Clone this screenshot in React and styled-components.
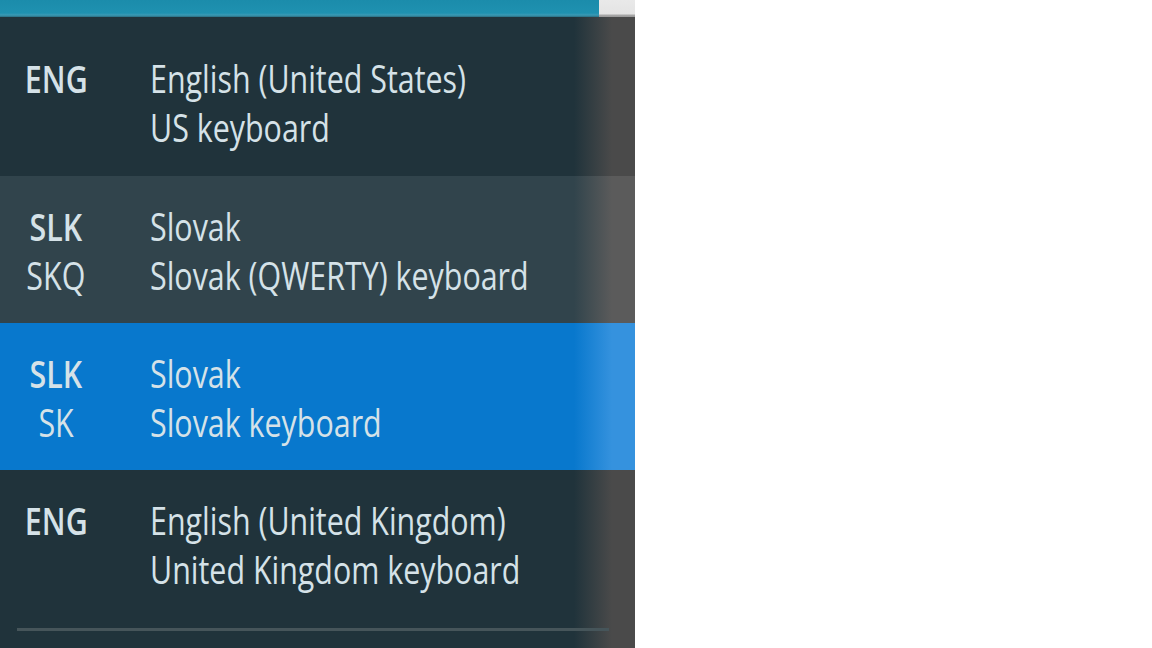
import React from 'react';
import styled, { createGlobalStyle } from 'styled-components';

const GlobalStyle = createGlobalStyle`
  html, body {
    margin: 0;
    padding: 0;
    background: #ffffff;
  }
  body {
    font-family: "Open Sans", "Noto Sans", sans-serif;
  }
`;

const PANEL_BG = '#20333b';

// right edge of the flyout fades into the grey window behind it
const edgeFade = (base, edge) =>
  `linear-gradient(to right, ${base} 0, ${base} 574px, ${edge} 612px, ${edge} 100%)`;

const Page = styled.div`
  width: 1152px;
  height: 648px;
  display: flex;
  overflow: hidden;
`;

const Panel = styled.div`
  width: 635px;
  height: 648px;
  display: flex;
  flex-direction: column;
  background: ${edgeFade(PANEL_BG, '#4a4a4a')};
`;

const TopBar = styled.div`
  height: 17px;
  display: flex;
  flex-shrink: 0;
`;

const TealStrip = styled.div`
  flex: 1;
  background: linear-gradient(to bottom, #1b8cab 0, #1f91b0 13px, #3a9ab5 15px, #2a6e82 17px);
`;

const GreyStrip = styled.div`
  width: 36px;
  background: linear-gradient(to bottom, #e9e9e9 0, #e4e4e4 14px, #a9a9a9 15px, #9a9a9a 17px);
`;

const Row = styled.div`
  display: grid;
  grid-template-columns: 112px 1fr;
  column-gap: 38px;
  padding: ${(p) => (p.$first ? '37px' : '26px')} 0 ${(p) => (p.$first ? '24px' : '23px')};
  background: ${(p) => edgeFade(p.$bg, p.$edge)};
  color: #d5e2e8;
`;

const Line = styled.div`
  height: 49px;
  line-height: 49px;
  font-size: 38px;
  white-space: nowrap;
`;

const CodeLine = styled(Line)`
  text-align: center;
  font-weight: ${(p) => (p.$bold ? 600 : 400)};
`;

const Squeeze = styled.span`
  display: inline-block;
  transform: scaleX(0.8);
  transform-origin: ${(p) => (p.$center ? 'center' : 'left')};
`;

const Divider = styled.div`
  margin: 11px 0 0 17px;
  width: 592px;
  height: 3px;
  background: #46555a;
`;

const layouts = [
  { code: 'ENG', sub: '', name: 'English (United States)', kb: 'US keyboard', bg: PANEL_BG, edge: '#4a4a4a' },
  { code: 'SLK', sub: 'SKQ', name: 'Slovak', kb: 'Slovak (QWERTY) keyboard', bg: '#31444c', edge: '#5b5b5b' },
  { code: 'SLK', sub: 'SK', name: 'Slovak', kb: 'Slovak keyboard', bg: '#0878cd', edge: '#3592de' },
  { code: 'ENG', sub: '', name: 'English (United Kingdom)', kb: 'United Kingdom keyboard', bg: PANEL_BG, edge: '#4a4a4a' },
];

const App = () => {
  return (
    <Page>
      <GlobalStyle />
      <Panel>
        <TopBar>
          <TealStrip />
          <GreyStrip />
        </TopBar>
        {layouts.map((item, i) => (
          <Row key={i} $first={i === 0} $bg={item.bg} $edge={item.edge}>
            <div>
              <CodeLine $bold>
                <Squeeze $center>{item.code}</Squeeze>
              </CodeLine>
              <CodeLine>
                <Squeeze $center>{item.sub}</Squeeze>
              </CodeLine>
            </div>
            <div>
              <Line>
                <Squeeze>{item.name}</Squeeze>
              </Line>
              <Line>
                <Squeeze>{item.kb}</Squeeze>
              </Line>
            </div>
          </Row>
        ))}
        <Divider />
      </Panel>
    </Page>
  );
};

export default App;
